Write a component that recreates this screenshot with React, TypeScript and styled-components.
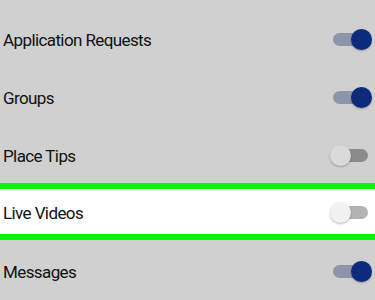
import React from "react";
import styled, { createGlobalStyle } from "styled-components";

interface IToggleProps {
  on: boolean;
  light?: boolean;
}

interface IRowProps {
  highlighted?: boolean;
}

const GlobalStyle = createGlobalStyle`
  html, body {
    margin: 0;
    padding: 0;
    background: #d0d0d0;
  }
  body {
    font-family: Roboto, "Noto Sans", sans-serif;
  }
`;

const SettingsList = styled.div`
  display: flex;
  flex-direction: column;
  padding-top: 11px;
  width: 375px;
  height: 300px;
  overflow: hidden;
  background: #d0d0d0;
`;

const SettingRow = styled.div<IRowProps>`
  box-sizing: border-box;
  display: flex;
  align-items: center;
  justify-content: space-between;
  flex-shrink: 0;
  height: ${(p) => (p.highlighted ? "57px" : "58px")};
  padding: ${(p) => (p.highlighted ? "3px 7px 0 3px" : "0 7px 0 3px")};
  margin: ${(p) => (p.highlighted ? "-2px 0 3px" : "0")};
  background: ${(p) => (p.highlighted ? "#ffffff" : "transparent")};
  border-top: ${(p) => (p.highlighted ? "6px solid #0cf20c" : "none")};
  border-bottom: ${(p) => (p.highlighted ? "6px solid #0cf20c" : "none")};
`;

const SettingLabel = styled.span`
  font-size: 17px;
  color: #111111;
  letter-spacing: -0.6px;
  margin-top: -1px;
`;

const ToggleTrack = styled.div<IToggleProps>`
  position: relative;
  width: 35px;
  height: 13px;
  margin-top: -2px;
  border-radius: 7px;
  background: ${(p) => (p.on ? "#8d95aa" : p.light ? "#b3b3b3" : "#8b8b8b")};
`;

const ToggleKnob = styled.div<IToggleProps>`
  position: absolute;
  top: -4px;
  left: ${(p) => (p.on ? "18px" : "-3px")};
  width: 21px;
  height: 21px;
  border-radius: 50%;
  background: ${(p) => (p.on ? "#0c2b7a" : p.light ? "#f1f1f1" : "#dadada")};
  box-shadow: 0 1px 2px rgba(0, 0, 0, 0.28);
`;

const Toggle: React.FC<IToggleProps> = ({ on, light }: IToggleProps): JSX.Element => (
  <ToggleTrack on={on} light={light}>
    <ToggleKnob on={on} light={light} />
  </ToggleTrack>
);

const settings = [
  { name: "Application Requests", on: true },
  { name: "Groups", on: true },
  { name: "Place Tips", on: false },
  { name: "Live Videos", on: false, highlighted: true },
  { name: "Messages", on: true },
];

const App: React.FC = (): JSX.Element => (
  <>
    <GlobalStyle />
    <SettingsList>
      {settings.map((s) => (
        <SettingRow key={s.name} highlighted={s.highlighted}>
          <SettingLabel>{s.name}</SettingLabel>
          <Toggle on={s.on} light={s.highlighted} />
        </SettingRow>
      ))}
    </SettingsList>
  </>
);

export default App;
